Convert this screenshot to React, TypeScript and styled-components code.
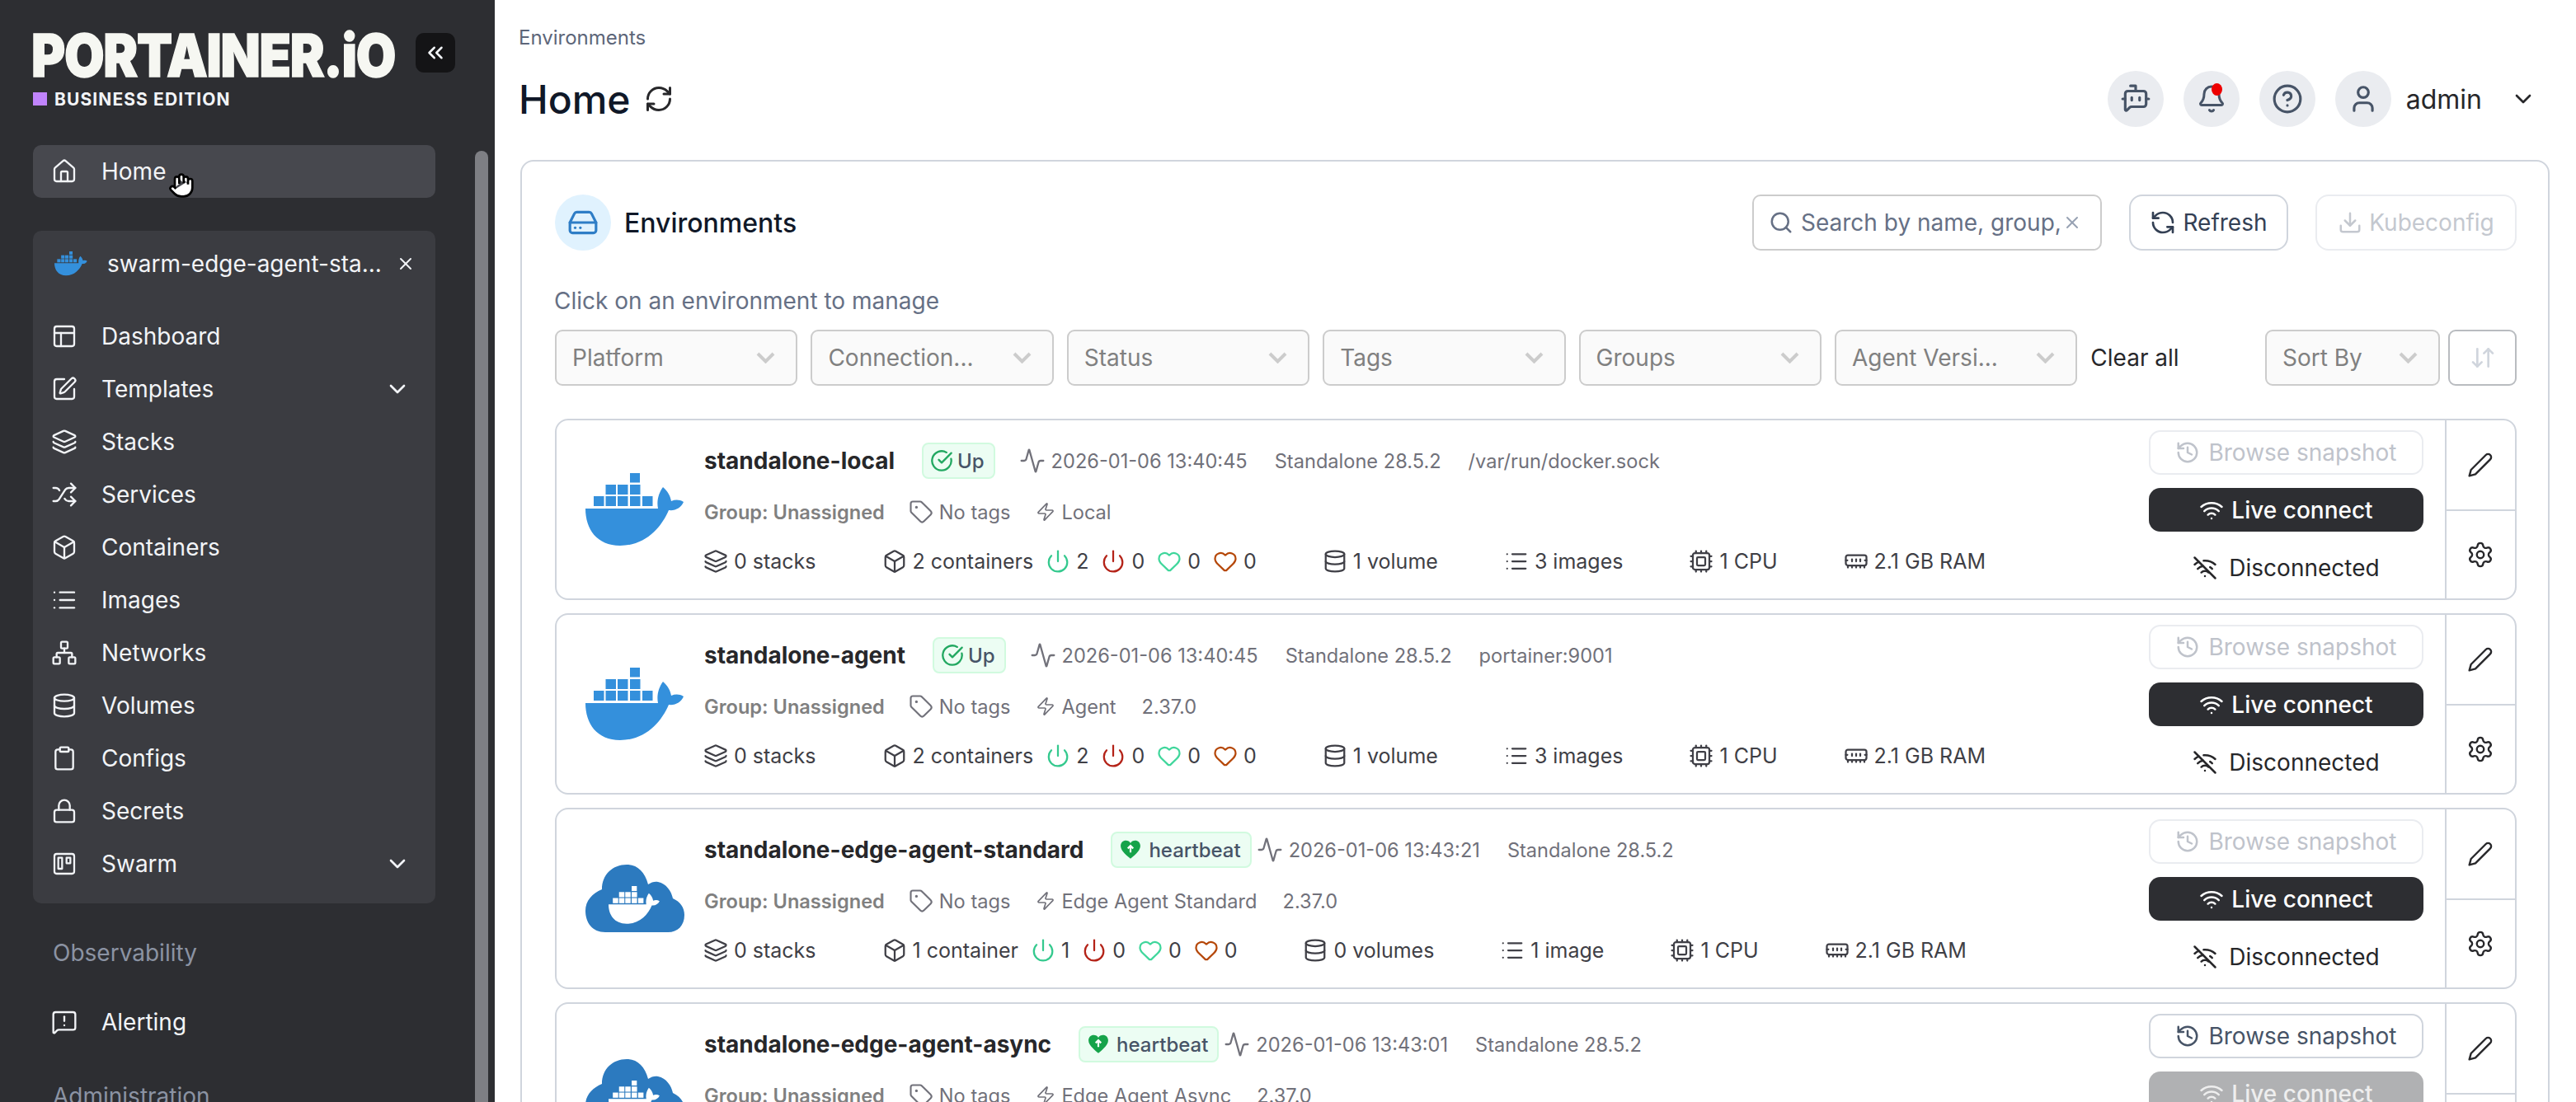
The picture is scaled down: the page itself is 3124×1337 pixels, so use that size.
import React from 'react';
import styled, { createGlobalStyle } from 'styled-components';
import {
  Activity, ArrowDownUp, BotMessageSquare, Bell, Box, ChevronDown, ChevronsLeft, CircleCheckBig, CircleHelp,
  Clipboard, Cpu, Database, Download, HardDrive, Heart, History, House, Layers, List, Lock, MemoryStick,
  MessageSquareWarning, Network, PanelsTopLeft, Power, RefreshCcw, RefreshCw, Search, Settings, Shuffle,
  SquarePen, Tag, User, Wifi, WifiOff, X, Zap,
} from 'lucide-react';

const Global = createGlobalStyle`
  html, body { margin: 0; padding: 0; background: #fff; }
  body { font-family: Inter, "Noto Sans", "Liberation Sans", sans-serif; overflow: hidden; }
  * { box-sizing: border-box; }
`;

const Page = styled.div`
  display: flex;
  width: 3124px;
  height: 1337px;
  overflow: hidden;
`;

/* ---------- Sidebar ---------- */
const Sidebar = styled.aside`
  flex: none;
  display: flex;
  width: 600px;
  height: 1337px;
  background: #2d2e32;
  overflow: hidden;
`;
const NavColumn = styled.div`
  flex: none;
  width: 576px;
  padding: 41px 48px 0 40px;
`;
const ScrollRail = styled.div`
  flex: none;
  width: 16px;
  padding-top: 183px;
`;
const ScrollThumb = styled.div`
  height: 1300px;
  border-radius: 8px;
  background: #7e7f84;
`;
const Brand = styled.div`
  display: flex;
  align-items: flex-start;
  height: 52px;
  margin-right: -24px;
`;
const LogoWord = styled.div`
  flex: none;
  width: 464px;
  margin-left: -2px;
  font-size: 72px;
  line-height: 52px;
  font-weight: 900;
  color: #f6f7f2;
  letter-spacing: -1.5px;
  white-space: nowrap;
  transform: scaleX(0.872);
  transform-origin: left center;
  -webkit-text-stroke: 1.4px #f6f7f2;
`;
const CollapseButton = styled.div`
  flex: none;
  display: flex;
  align-items: center;
  justify-content: center;
  width: 48px;
  height: 48px;
  margin: -1px 0 0 2px;
  border-radius: 10px;
  background: #141416;
  color: #f2f4f7;
`;
const Edition = styled.div`
  display: flex;
  align-items: center;
  gap: 9px;
  height: 16px;
  margin-top: 19px;
  font-size: 21px;
  font-weight: 700;
  letter-spacing: 1.1px;
  color: #f2f4f7;
  white-space: nowrap;
`;
const EditionSwatch = styled.span`
  width: 17px;
  height: 16px;
  background: #c084fc;
`;
const NavRow = styled.div<{ $active?: boolean }>`
  position: relative;
  display: flex;
  align-items: center;
  gap: 29px;
  height: 64px;
  padding: 0 30px 0 22px;
  border-radius: 10px;
  font-size: 28px;
  color: #f2f4f7;
  white-space: nowrap;
  background: ${p => (p.$active ? '#47484e' : 'transparent')};
`;
const HomeRow = styled(NavRow)`
  margin-top: 48px;
`;
const RowEnd = styled.span`
  display: flex;
  margin-left: auto;
`;
const EnvPanel = styled.div`
  margin-top: 40px;
  padding-bottom: 16px;
  border-radius: 10px;
  background: #3b3c41;
`;
const EnvHead = styled.div`
  display: flex;
  align-items: center;
  height: 80px;
  margin-bottom: 16px;
  padding: 0 24px 0 26px;
  font-size: 28px;
  color: #f2f4f7;
  white-space: nowrap;
`;
const EnvName = styled.span`
  margin-left: 24px;
`;
const SectionTitle = styled.div<{ $top: number }>`
  height: 40px;
  margin-top: ${p => p.$top}px;
  padding-left: 24px;
  font-size: 28px;
  line-height: 40px;
  color: #8b93a3;
  white-space: nowrap;
`;
const AlertRow = styled(NavRow)`
  margin-top: 32px;
`;
const Cursor = styled.svg`
  position: absolute;
  left: 164px;
  top: 31px;
`;

/* ---------- Main ---------- */
const Main = styled.main`
  flex: 1;
  height: 1337px;
  padding: 30px 32px 0 31px;
  overflow: hidden;
`;
const Crumb = styled.div`
  height: 32px;
  margin-left: -2px;
  font-size: 24px;
  line-height: 32px;
  color: #5d6679;
`;
const TitleBar = styled.header`
  display: flex;
  align-items: center;
  height: 68px;
  margin-top: 24px;
`;
const Title = styled.h1`
  margin: 0 16px 0 -2px;
  font-size: 48px;
  font-weight: 500;
  color: #101828;
`;
const TitleRefresh = styled.span`
  display: flex;
  color: #27272a;
`;
const TopActions = styled.div`
  display: flex;
  align-items: center;
  gap: 24px;
  margin-left: auto;
  margin-right: 16px;
`;
const RoundIcon = styled.div`
  position: relative;
  display: flex;
  align-items: center;
  justify-content: center;
  width: 68px;
  height: 68px;
  border-radius: 50%;
  background: #eaecf0;
  color: #475467;
`;
const RedDot = styled.span`
  position: absolute;
  top: 15px;
  left: 34px;
  width: 13px;
  height: 15px;
  border-radius: 50%;
  background: #ee0000;
`;
const UserMenu = styled.div`
  display: flex;
  align-items: center;
  gap: 34px;
  margin-left: -6px;
  font-size: 32px;
  color: #27272a;
`;
const Widget = styled.section`
  height: 1400px;
  margin-top: 40px;
  padding: 40px 38px 0 40px;
  border: 2px solid #d0d5dd;
  border-radius: 16px;
`;
const WidgetHead = styled.div`
  display: flex;
  align-items: center;
  height: 68px;
`;
const WidgetIcon = styled.div`
  display: flex;
  align-items: center;
  justify-content: center;
  width: 68px;
  height: 68px;
  border-radius: 50%;
  background: #e0f2fe;
  color: #2e7dc6;
`;
const WidgetTitle = styled.h2`
  margin: 0 0 0 16px;
  font-size: 32px;
  font-weight: 500;
  color: #101828;
`;
const WidgetTools = styled.div`
  display: flex;
  align-items: center;
  margin-left: auto;
`;
const SearchBox = styled.div`
  display: flex;
  align-items: center;
  width: 424px;
  height: 68px;
  padding: 0 22px 0 18px;
  border: 2px solid #cccccc;
  border-radius: 10px;
  color: #667085;
`;
const SearchText = styled.span`
  flex: 1;
  margin-left: 9px;
  font-size: 28px;
  white-space: nowrap;
`;
const ClearIcon = styled.span`
  display: flex;
  color: #98a2b3;
`;
const ToolButton = styled.div<{ $disabled?: boolean; $width: number }>`
  display: flex;
  align-items: center;
  justify-content: center;
  gap: 8px;
  width: ${p => p.$width}px;
  height: 68px;
  margin-left: 33px;
  border: 2px solid ${p => (p.$disabled ? '#eaecf0' : '#d0d5dd')};
  border-radius: 16px;
  font-size: 28px;
  color: ${p => (p.$disabled ? '#c4c8cf' : '#344054')};
`;
const Hint = styled.div`
  height: 40px;
  margin: 41px 0 0 -1px;
  font-size: 28px;
  line-height: 40px;
  color: #667085;
`;
const FilterBar = styled.div`
  display: flex;
  align-items: center;
  gap: 16px;
  margin-top: 15px;
`;
const FilterBox = styled.div<{ $width: number }>`
  flex: none;
  display: flex;
  align-items: center;
  justify-content: space-between;
  width: ${p => p.$width}px;
  height: 68px;
  padding: 0 25px 0 19px;
  border: 2px solid #cccccc;
  border-radius: 9px;
  background: #fafafa;
  font-size: 28px;
  color: #808080;
  white-space: nowrap;
`;
const ClearAll = styled.span`
  font-size: 28px;
  color: #27272a;
  white-space: nowrap;
`;
const SortGroup = styled.div`
  display: flex;
  gap: 10px;
  margin-left: auto;
`;
const SortToggle = styled.div`
  display: flex;
  align-items: center;
  justify-content: center;
  width: 83px;
  height: 68px;
  border: 2px solid #b9bcc0;
  border-radius: 9px;
  color: #d0d5dd;
`;
const CardList = styled.div`
  display: flex;
  flex-direction: column;
  gap: 16px;
  margin-top: 40px;
`;
const Card = styled.article`
  flex: none;
  display: flex;
  height: 220px;
  border: 2px solid #d0d5dd;
  border-radius: 16px;
  overflow: hidden;
`;
const LogoCell = styled.div`
  flex: none;
  width: 179px;
  padding: 0 0 0 35px;
  display: flex;
  align-items: center;
`;
const CardBody = styled.div`
  flex: 1;
  min-width: 0;
  padding-top: 18px;
`;
const Line = styled.div<{ $gap: number }>`
  display: flex;
  align-items: center;
  gap: ${p => p.$gap}px;
  height: 62px;
  font-size: 23.6px;
  color: #71717a;
  white-space: nowrap;
`;
const CardName = styled.span`
  font-size: 28px;
  font-weight: 700;
  color: #27272a;
`;
const Badge = styled.span`
  display: flex;
  align-items: center;
  gap: 5px;
  height: 44px;
  padding: 0 11px 0 8px;
  border: 2px solid #d1fadf;
  border-radius: 8px;
  background: #ecfdf3;
  font-size: 24px;
  font-weight: 500;
  color: #475467;
`;
const BadgeIcon = styled.span`
  display: flex;
  color: #22a861;
`;
const HeartSlot = styled(BadgeIcon)`
  margin: 0 4px 0 1px;
`;
const IconText = styled.span<{ $shift?: number }>`
  display: flex;
  align-items: center;
  gap: 7px;
  margin-left: ${p => p.$shift ?? 0}px;
`;
const GroupLabel = styled.span`
  font-weight: 600;
  color: #808080;
`;
const StatLine = styled(Line)`
  margin: -2px 0 0 -1px;
  font-size: 25px;
  color: #3f3f46;
`;
const CountRow = styled.span`
  display: flex;
  align-items: center;
  gap: 15px;
`;
const Tint = styled.span<{ $color: string }>`
  display: flex;
  color: ${p => p.$color};
`;
const ActionColumn = styled.div`
  flex: none;
  display: flex;
  flex-direction: column;
  gap: 16px;
  width: 333px;
  margin-right: 26px;
  padding-top: 12px;
`;
const SnapshotButton = styled.div<{ $disabled?: boolean }>`
  display: flex;
  align-items: center;
  justify-content: center;
  gap: 10px;
  height: 54px;
  border: 2px solid ${p => (p.$disabled ? '#eaecf0' : '#d0d5dd')};
  border-radius: 14px;
  font-size: 28px;
  color: ${p => (p.$disabled ? '#bfc3cb' : '#475467')};
`;
const ConnectButton = styled.div<{ $disabled?: boolean }>`
  display: flex;
  align-items: center;
  justify-content: center;
  gap: 9px;
  height: 53px;
  border-radius: 14px;
  background: ${p => (p.$disabled ? '#b0b1b3' : '#2d2e32')};
  font-size: 28px;
  font-weight: 500;
  color: ${p => (p.$disabled ? '#eeeeee' : '#ffffff')};
`;
const ConnStatus = styled.div`
  display: flex;
  align-items: center;
  justify-content: center;
  gap: 14px;
  height: 34px;
  margin-top: 11px;
  font-size: 28px;
  color: #27272a;
`;
const SideActions = styled.div`
  flex: none;
  display: grid;
  grid-template-rows: 1fr 1fr;
  width: 85px;
  border-left: 2px solid #d0d5dd;
`;
const SideAction = styled.div<{ $divider?: boolean }>`
  display: flex;
  align-items: center;
  justify-content: center;
  padding-right: 2px;
  color: #27272a;
  border-top: ${p => (p.$divider ? '2px solid #d0d5dd' : 'none')};
`;

/* ---------- Drawings ---------- */
const Whale: React.FC<{ fill: string }> = ({ fill }) => (
  <g fill={fill}>
    <rect x="54" y="0" width="12" height="11.5" />
    {[24.5, 39, 54].map(x => <rect key={x} x={x} y="14" width="12.5" height="12" />)}
    {[10, 24.5, 39, 54, 69].map(x => <rect key={x} x={x} y="28" width="12.5" height="12" />)}
    <path d="M0 43 L88 43 C86 33 89 24 94 17 C100 22 103 28 104 34 C109 32 114 32 119 35 C116 42 109 46 101 45 C92 66 73 88 42 88 C14 88 0 68 0 43 Z" />
  </g>
);
const DockerLogo: React.FC<{ size?: number }> = ({ size = 120 }) => (
  <svg width={size} height={size * 88 / 120} viewBox="0 0 120 88"><Whale fill="#3490dc" /></svg>
);
const CloudLogo = () => (
  <svg width="120" height="82" viewBox="0 0 120 82">
    <path fill="#2c7abf" d="M24 82 C8 82 0 70 0 56 C0 44 8 35 20 30 C20 12 33 0 50 0 C63 0 72 9 76 24 C80 21 85 20 88 21 C98 23 104 32 106 41 C115 45 120 52 120 61 C120 74 112 82 100 82 Z" />
    <g transform="translate(28 26) scale(0.52)"><Whale fill="#ffffff" /></g>
  </svg>
);
const SwarmIcon = () => (
  <svg width="32" height="32" viewBox="0 0 24 24" fill="none" stroke="currentColor" strokeWidth="1.7" strokeLinejoin="round">
    <rect x="3" y="3" width="18" height="18" rx="2" />
    <rect x="6.500" y="6.500" width="3.500" height="10" />
    <rect x="14" y="6.500" width="3.500" height="5" />
  </svg>
);
const FilterChevron = () => (
  <svg width="23" height="14" viewBox="0 0 23 14" fill="none" stroke="#cccccc" strokeWidth="4"><polyline points="2,2 11.5,11.5 21,2" /></svg>
);
const HeartBeatIcon = () => (
  <svg width="26" height="28" viewBox="0 0 24 24">
    <path fill="#16a34a" d="M12 22 C5 16 1 12 1 7.5 C1 4 3.6 1.5 6.8 1.5 C9 1.5 11 2.6 12 4.5 C13 2.6 15 1.5 17.2 1.5 C20.4 1.5 23 4 23 7.5 C23 12 19 16 12 22 Z" />
    <path fill="none" stroke="#fff" strokeWidth="2" d="M12 15 V8 M9 10.5 L12 7.5 L15 10.5" />
  </svg>
);
const SlimPencil = () => (
  <svg width="32" height="32" viewBox="0 0 24 24" fill="none" stroke="currentColor" strokeWidth="1.8" strokeLinecap="round" strokeLinejoin="round">
    <path d="M17 3a2.828 2.828 0 1 1 4 4L7.500 20.500 2 22l1.500-5.500L17 3z" />
  </svg>
);

/* ---------- Data ---------- */
const ICON = { size: 32, strokeWidth: 1.75 };
const STAT = { size: 30, strokeWidth: 1.8 };
const NAV = [
  { label: 'Dashboard', icon: <PanelsTopLeft {...ICON} /> },
  { label: 'Templates', icon: <SquarePen {...ICON} />, more: true },
  { label: 'Stacks', icon: <Layers {...ICON} /> },
  { label: 'Services', icon: <Shuffle {...ICON} /> },
  { label: 'Containers', icon: <Box {...ICON} /> },
  { label: 'Images', icon: <List {...ICON} /> },
  { label: 'Networks', icon: <Network {...ICON} /> },
  { label: 'Volumes', icon: <Database {...ICON} /> },
  { label: 'Configs', icon: <Clipboard {...ICON} /> },
  { label: 'Secrets', icon: <Lock {...ICON} /> },
  { label: 'Swarm', icon: <SwarmIcon />, more: true },
];
const FILTERS = ['Platform', 'Connection...', 'Status', 'Tags', 'Groups', 'Agent Versi...'];

type Env = {
  name: string; edge?: boolean; date: string; path?: string; kind: string; version?: string;
  containers: string; running: string; volumes: string; images: string; live?: boolean;
};
const ENVS: Env[] = [
  { name: 'standalone-local', date: '2026-01-06 13:40:45', path: '/var/run/docker.sock', kind: 'Local', containers: '2 containers', running: '2', volumes: '1 volume', images: '3 images', live: true },
  { name: 'standalone-agent', date: '2026-01-06 13:40:45', path: 'portainer:9001', kind: 'Agent', version: '2.37.0', containers: '2 containers', running: '2', volumes: '1 volume', images: '3 images', live: true },
  { name: 'standalone-edge-agent-standard', edge: true, date: '2026-01-06 13:43:21', kind: 'Edge Agent Standard', version: '2.37.0', containers: '1 container', running: '1', volumes: '0 volumes', images: '1 image', live: true },
  { name: 'standalone-edge-agent-async', edge: true, date: '2026-01-06 13:43:01', kind: 'Edge Agent Async', version: '2.37.0', containers: '1 container', running: '1', volumes: '0 volumes', images: '1 image' },
];

const EnvCard: React.FC<{ env: Env }> = ({ env }) => (
  <Card>
    <LogoCell>{env.edge ? <CloudLogo /> : <DockerLogo />}</LogoCell>
    <CardBody>
      <Line $gap={33}>
        <CardName>{env.name}</CardName>
        {env.edge
          ? <Badge><HeartSlot><HeartBeatIcon /></HeartSlot>heartbeat</Badge>
          : <Badge><BadgeIcon><CircleCheckBig size={28} /></BadgeIcon>Up</Badge>}
        <IconText $shift={env.edge ? -27 : -4}><Activity size={32} strokeWidth={1.7} />{env.date}</IconText>
        <span>Standalone 28.5.2</span>
        {env.path && <span>{env.path}</span>}
      </Line>
      <Line $gap={31}>
        <GroupLabel>Group: Unassigned</GroupLabel>
        <IconText $shift={-2}><Tag size={30} strokeWidth={1.7} />No tags</IconText>
        <IconText><Zap size={24} strokeWidth={1.7} />{env.kind}</IconText>
        {env.version && <span>{env.version}</span>}
      </Line>
      <StatLine $gap={80}>
        <IconText><Layers {...STAT} />0 stacks</IconText>
        <CountRow>
          <IconText><Box {...STAT} />{env.containers}</IconText>
          <IconText><Tint $color="#34c98e"><Power {...STAT} /></Tint>{env.running}</IconText>
          <IconText><Tint $color="#b42318"><Power {...STAT} /></Tint>0</IconText>
          <IconText><Tint $color="#3fd69b"><Heart {...STAT} /></Tint>0</IconText>
          <IconText><Tint $color="#b54708"><Heart {...STAT} /></Tint>0</IconText>
        </CountRow>
        <IconText><Database {...STAT} />{env.volumes}</IconText>
        <IconText><List {...STAT} />{env.images}</IconText>
        <IconText><Cpu {...STAT} />1 CPU</IconText>
        <IconText><MemoryStick {...STAT} />2.1 GB RAM</IconText>
      </StatLine>
    </CardBody>
    <ActionColumn>
      <SnapshotButton $disabled={env.live}><History size={30} />Browse snapshot</SnapshotButton>
      <ConnectButton $disabled={!env.live}><Wifi size={30} />Live connect</ConnectButton>
      <ConnStatus><WifiOff size={30} />Disconnected</ConnStatus>
    </ActionColumn>
    <SideActions>
      <SideAction><SlimPencil /></SideAction>
      <SideAction $divider><Settings size={34} strokeWidth={1.7} /></SideAction>
    </SideActions>
  </Card>
);

export default function App() {
  return (
    <Page>
      <Global />
      <Sidebar>
        <NavColumn>
          <Brand>
            <LogoWord>PORTAINER.iO</LogoWord>
            <CollapseButton><ChevronsLeft size={30} /></CollapseButton>
          </Brand>
          <Edition><EditionSwatch />BUSINESS EDITION</Edition>
          <HomeRow $active>
            <House {...ICON} />Home
            <Cursor width="32" height="36" viewBox="0 0 24 24" fill="#fff" stroke="#000" strokeWidth="2">
              <path d="M18 11V6a2 2 0 0 0-4 0M14 10V4a2 2 0 0 0-4 0v2M10 10.500V6a2 2 0 0 0-4 0v8M18 8a2 2 0 1 1 4 0v6a8 8 0 0 1-8 8h-2c-2.800 0-4.500-.860-5.990-2.340l-3.600-3.600a2 2 0 0 1 2.830-2.820L7 15" />
            </Cursor>
          </HomeRow>
          <EnvPanel>
            <EnvHead>
              <DockerLogo size={40} />
              <EnvName>swarm-edge-agent-sta...</EnvName>
              <RowEnd><X size={24} /></RowEnd>
            </EnvHead>
            {NAV.map(item => (
              <NavRow key={item.label}>
                {item.icon}{item.label}
                {item.more && <RowEnd><ChevronDown size={32} /></RowEnd>}
              </NavRow>
            ))}
          </EnvPanel>
          <SectionTitle $top={40}>Observability</SectionTitle>
          <AlertRow><MessageSquareWarning {...ICON} />Alerting</AlertRow>
          <SectionTitle $top={38}>Administration</SectionTitle>
        </NavColumn>
        <ScrollRail><ScrollThumb /></ScrollRail>
      </Sidebar>
      <Main>
        <Crumb>Environments</Crumb>
        <TitleBar>
          <Title>Home</Title>
          <TitleRefresh><RefreshCw size={36} /></TitleRefresh>
          <TopActions>
            <RoundIcon><BotMessageSquare size={38} /></RoundIcon>
            <RoundIcon><Bell size={36} /><RedDot /></RoundIcon>
            <RoundIcon><CircleHelp size={38} /></RoundIcon>
            <RoundIcon><User size={38} /></RoundIcon>
            <UserMenu>admin<ChevronDown size={32} /></UserMenu>
          </TopActions>
        </TitleBar>
        <Widget>
          <WidgetHead>
            <WidgetIcon><HardDrive size={38} /></WidgetIcon>
            <WidgetTitle>Environments</WidgetTitle>
            <WidgetTools>
              <SearchBox>
                <Search size={30} />
                <SearchText>Search by name, group,</SearchText>
                <ClearIcon><X size={24} /></ClearIcon>
              </SearchBox>
              <ToolButton $width={193}><RefreshCcw size={32} />Refresh</ToolButton>
              <ToolButton $width={244} $disabled><Download size={30} />Kubeconfig</ToolButton>
            </WidgetTools>
          </WidgetHead>
          <Hint>Click on an environment to manage</Hint>
          <FilterBar>
            {FILTERS.map(f => <FilterBox key={f} $width={294.4}>{f}<FilterChevron /></FilterBox>)}
            <ClearAll>Clear all</ClearAll>
            <SortGroup>
              <FilterBox $width={212}>Sort By<FilterChevron /></FilterBox>
              <SortToggle><ArrowDownUp size={32} /></SortToggle>
            </SortGroup>
          </FilterBar>
          <CardList>
            {ENVS.map(env => <EnvCard key={env.name} env={env} />)}
          </CardList>
        </Widget>
      </Main>
    </Page>
  );
}
